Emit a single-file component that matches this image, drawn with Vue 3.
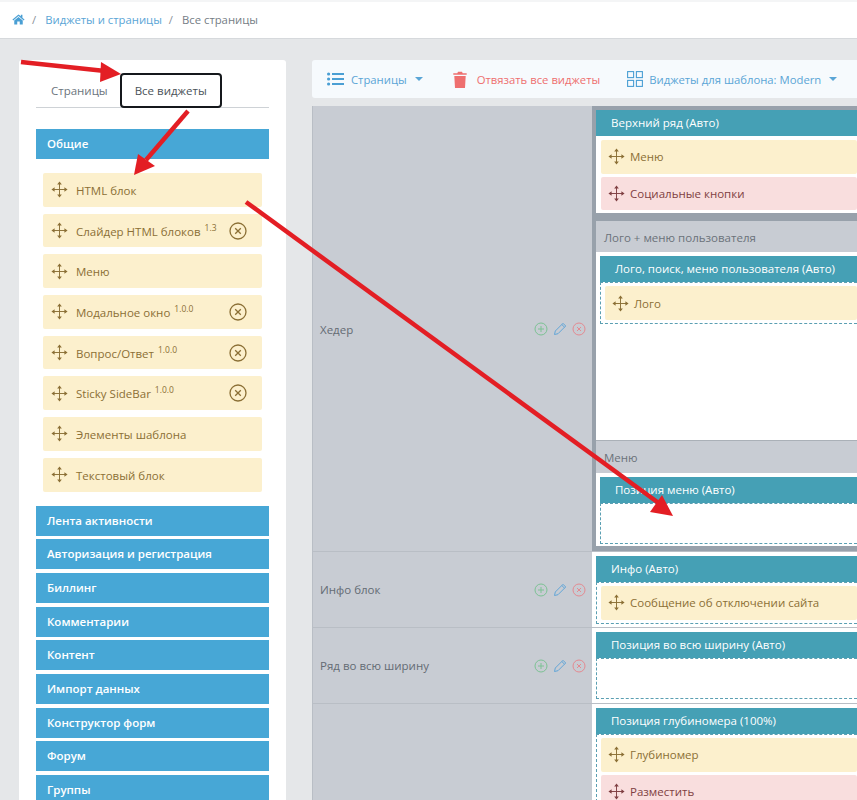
<script setup>
const general = [
  { name: 'HTML блок' },
  { name: 'Слайдер HTML блоков', ver: '1.3', off: true },
  { name: 'Меню' },
  { name: 'Модальное окно', ver: '1.0.0', off: true },
  { name: 'Вопрос/Ответ', ver: '1.0.0', off: true },
  { name: 'Sticky SideBar', ver: '1.0.0', off: true },
  { name: 'Элементы шаблона' },
  { name: 'Текстовый блок' },
]
const groups = [
  'Лента активности',
  'Авторизация и регистрация',
  'Биллинг',
  'Комментарии',
  'Контент',
  'Импорт данных',
  'Конструктор форм',
  'Форум',
  'Группы',
]
const moveLines = 'M8 2V14M2 8H14'
const moveHeads = 'M5.8 3.4L8 0.4L10.2 3.4ZM5.8 12.6L8 15.6L10.2 12.6ZM3.4 5.8L0.4 8L3.4 10.2ZM12.6 5.8L15.6 8L12.6 10.2Z'
</script>

<template>
  <div class="page">
    <nav class="crumbs">
      <svg class="home" viewBox="0 0 16 14" width="13" height="11"><path d="M8 0.5L0.3 7L1.3 8.2L8 2.6L14.7 8.2L15.7 7L13 4.7V1H11V3L8 0.5ZM2.6 8.4V13.5H6.4V9.6H9.6V13.5H13.4V8.4L8 3.9Z" /></svg>
      <span class="sep">/</span>
      <a class="link">Виджеты и страницы</a>
      <span class="sep">/</span>
      <span class="current">Все страницы</span>
    </nav>

    <div class="content">
      <aside class="side">
        <div class="tabs">
          <span class="tab">Страницы</span>
          <span class="tab active">Все виджеты</span>
        </div>
        <div class="group first">Общие</div>
        <div class="widgets">
          <div v-for="w in general" :key="w.name" class="widget yellow">
            <svg class="move" viewBox="0 0 16 16" width="17" height="17"><path class="ml" :d="moveLines" /><path class="mh" :d="moveHeads" /></svg>
            <span class="w-name">{{ w.name }}<sup v-if="w.ver">{{ w.ver }}</sup></span>
            <svg v-if="w.off" class="off" viewBox="0 0 18 18" width="18" height="18">
              <circle cx="9" cy="9" r="8" />
              <path d="M6.2 6.2L11.8 11.8M11.8 6.2L6.2 11.8" />
            </svg>
          </div>
        </div>
        <div class="groups">
          <div v-for="g in groups" :key="g" class="group">{{ g }}</div>
        </div>
      </aside>

      <main class="main">
        <div class="toolbar">
          <svg class="tool-icon" viewBox="0 0 17 14" width="17" height="14" fill="#4a9fd4">
            <circle cx="1.6" cy="2" r="1.6" /><circle cx="1.6" cy="7" r="1.6" /><circle cx="1.6" cy="12" r="1.6" />
            <rect x="5" y="1" width="12" height="2" /><rect x="5" y="6" width="12" height="2" /><rect x="5" y="11" width="12" height="2" />
          </svg>
          <span class="tool-text">Страницы</span>
          <i class="caret"></i>
          <svg class="trash" viewBox="0 0 14 17" width="14" height="17" fill="#ee6f6f">
            <path d="M0.3 2.2H4.3L5 0.8H9L9.7 2.2H13.7V3.8H0.3ZM1.3 5H12.7L12 17H2Z" />
          </svg>
          <span class="tool-text red">Отвязать все виджеты</span>
          <svg class="grid-icon" viewBox="0 0 16 16" width="16" height="16" fill="none" stroke="#4a9fd4" stroke-width="1.1">
            <rect x="0.6" y="0.6" width="6" height="6" /><rect x="9.4" y="0.6" width="6" height="6" />
            <rect x="0.6" y="9.4" width="6" height="6" /><rect x="9.4" y="9.4" width="6" height="6" />
          </svg>
          <span class="tool-text tpl">Виджеты для шаблона: Modern</span>
          <i class="caret"></i>
        </div>

        <div class="table">
          <section class="row header-row">
            <div class="row-side">
              <span class="hdr-name">Хедер</span>
              <div class="row-actions">
                <svg viewBox="0 0 14 14" width="14" height="14" class="green"><circle cx="7" cy="7" r="6" /><path d="M7 4V10M4 7H10" /></svg>
                <svg viewBox="0 0 14 14" width="14" height="14" class="blue"><path d="M1.5 12.5L2.3 9L10 1.3L12.7 4L5 11.7ZM8.8 2.5L11.5 5.2" /></svg>
                <svg viewBox="0 0 14 14" width="14" height="14" class="pink"><circle cx="7" cy="7" r="6" /><path d="M5 5L9 9M9 5L5 9" /></svg>
              </div>
            </div>
            <div class="row-main nested">
              <div class="block">
                <div class="pos-title">Верхний ряд (Авто)</div>
                <div class="pos-drop solid">
                  <div class="widget yellow wide"><svg class="move" viewBox="0 0 16 16" width="17" height="17"><path class="ml" :d="moveLines" /><path class="mh" :d="moveHeads" /></svg><span>Меню</span></div>
                  <div class="widget rose wide"><svg class="move" viewBox="0 0 16 16" width="17" height="17"><path class="ml" :d="moveLines" /><path class="mh" :d="moveHeads" /></svg><span>Социальные кнопки</span></div>
                </div>
              </div>
              <div class="sub sub-logo">
                <div class="sub-title">Лого + меню пользователя</div>
                <div class="sub-body tall">
                  <div class="pos-title">Лого, поиск, меню пользователя (Авто)</div>
                  <div class="pos-drop">
                    <div class="widget yellow wide"><svg class="move" viewBox="0 0 16 16" width="17" height="17"><path class="ml" :d="moveLines" /><path class="mh" :d="moveHeads" /></svg><span class="w-name">Лого</span></div>
                  </div>
                </div>
              </div>
              <div class="sub sub-menu">
                <div class="sub-title">Меню</div>
                <div class="sub-body">
                  <div class="pos-title">Позиция меню (Авто)</div>
                  <div class="pos-drop empty"></div>
                </div>
              </div>
            </div>
          </section>

          <section class="row short">
            <div class="row-side">
              <span>Инфо блок</span>
              <div class="row-actions">
                <svg viewBox="0 0 14 14" width="14" height="14" class="green"><circle cx="7" cy="7" r="6" /><path d="M7 4V10M4 7H10" /></svg>
                <svg viewBox="0 0 14 14" width="14" height="14" class="blue"><path d="M1.5 12.5L2.3 9L10 1.3L12.7 4L5 11.7ZM8.8 2.5L11.5 5.2" /></svg>
                <svg viewBox="0 0 14 14" width="14" height="14" class="pink"><circle cx="7" cy="7" r="6" /><path d="M5 5L9 9M9 5L5 9" /></svg>
              </div>
            </div>
            <div class="row-main">
              <div class="pos-title">Инфо (Авто)</div>
              <div class="pos-drop">
                <div class="widget yellow wide"><svg class="move" viewBox="0 0 16 16" width="17" height="17"><path class="ml" :d="moveLines" /><path class="mh" :d="moveHeads" /></svg><span>Сообщение об отключении сайта</span></div>
              </div>
            </div>
          </section>

          <section class="row short">
            <div class="row-side">
              <span>Ряд во всю ширину</span>
              <div class="row-actions">
                <svg viewBox="0 0 14 14" width="14" height="14" class="green"><circle cx="7" cy="7" r="6" /><path d="M7 4V10M4 7H10" /></svg>
                <svg viewBox="0 0 14 14" width="14" height="14" class="blue"><path d="M1.5 12.5L2.3 9L10 1.3L12.7 4L5 11.7ZM8.8 2.5L11.5 5.2" /></svg>
                <svg viewBox="0 0 14 14" width="14" height="14" class="pink"><circle cx="7" cy="7" r="6" /><path d="M5 5L9 9M9 5L5 9" /></svg>
              </div>
            </div>
            <div class="row-main">
              <div class="pos-title">Позиция во всю ширину (Авто)</div>
              <div class="pos-drop empty"></div>
            </div>
          </section>

          <section class="row last">
            <div class="row-side"></div>
            <div class="row-main">
              <div class="pos-title">Позиция глубиномера (100%)</div>
              <div class="pos-drop">
                <div class="widget yellow wide"><svg class="move" viewBox="0 0 16 16" width="17" height="17"><path class="ml" :d="moveLines" /><path class="mh" :d="moveHeads" /></svg><span>Глубиномер</span></div>
                <div class="widget rose wide"><svg class="move" viewBox="0 0 16 16" width="17" height="17"><path class="ml" :d="moveLines" /><path class="mh" :d="moveHeads" /></svg><span>Разместить</span></div>
              </div>
            </div>
          </section>
        </div>
      </main>
    </div>

    <svg class="arrows" viewBox="0 0 857 800" width="857" height="800">
      <path d="M21 62L105 71" />
      <polygon points="121,74 101,62 100,82" />
      <path d="M188 111L146 160" />
      <polygon points="134,175 138,154 155,166" />
      <path d="M246 202L660 504" />
      <polygon points="673,516 662,495 650,512" />
    </svg>
  </div>
</template>

<style>
html, body {
  margin: 0;
  background: #e5e7e9;
}
</style>

<style scoped>
.page {
  position: relative;
  width: 857px;
  height: 800px;
  overflow: hidden;
  background: #e5e7e9;
  font-family: "Open Sans", "Noto Sans", sans-serif;
  font-size: 11.5px;
  color: #6c757d;
}
.crumbs {
  display: flex;
  align-items: center;
  height: 38px;
  padding-left: 12px;
  background: #fff;
  border-bottom: 1px solid #d6d9dc;
  box-shadow: inset 0 2px 0 #f4f5f6;
  font-size: 11.3px;
}
.home {
  fill: #4a9fd4;
}
.sep {
  margin: 0 9px 0 7px;
  color: #8a9299;
}
.link {
  color: #5aa5d6;
}
.current {
  color: #757d85;
}
.content {
  display: flex;
  gap: 26px;
  padding: 21px 0 0 19px;
}
.side {
  flex: none;
  width: 267px;
  height: 760px;
  box-sizing: border-box;
  padding: 13px 17px 0;
  background: #fff;
  border-radius: 3px;
}
.tabs {
  display: flex;
  height: 34px;
  padding-left: 15px;
  gap: 12px;
  border-bottom: 1px solid #ced2d6;
  align-items: center;
  margin-bottom: 21px;
}
.tab {
  color: #6c757d;
}
.tab.active {
  display: flex;
  align-items: center;
  justify-content: center;
  width: 102px;
  height: 35px;
  margin-top: 1px;
  box-sizing: border-box;
  border: 2px solid #15181c;
  border-radius: 4px;
  background: #fff;
  color: #4a5258;
}
.group {
  height: 30px;
  line-height: 30px;
  padding-left: 11px;
  background: #47a7d6;
  color: #fff;
  font-weight: 600;
}
.widgets {
  display: flex;
  flex-direction: column;
  gap: 7px;
  padding: 14px 7px 14px;
}
.groups {
  display: flex;
  flex-direction: column;
  gap: 3.7px;
}
.widget {
  display: flex;
  align-items: center;
  gap: 8px;
  height: 33.7px;
  padding-left: 8px;
  border-radius: 2px;
}
.w-name {
  padding-top: 1px;
}
.hdr-name {
  padding-top: 1px;
}
.yellow {
  background: #fcf0cd;
  color: #8b6f35;
}
.rose {
  background: #f9dede;
  color: #7f3f42;
}
.wide {
  padding-left: 7px;
  gap: 5px;
}
.move {
  flex: none;
}
.ml {
  fill: none;
  stroke: currentColor;
  stroke-width: 0.9;
}
.mh {
  fill: currentColor;
}
sup {
  font-size: 8.5px;
  margin-left: 4px;
  line-height: 0;
  vertical-align: 5px;
}
.off {
  flex: none;
  margin-left: auto;
  margin-right: 15px;
  fill: none;
  stroke: #8b6f35;
  stroke-width: 1.3;
}
.main {
  flex: 1;
  min-width: 0;
}
.toolbar {
  display: flex;
  align-items: center;
  height: 38px;
  padding-left: 15px;
  margin-bottom: 8px;
  background: #f6fafd;
  border-radius: 3px 0 0 3px;
  font-size: 11.3px;
}
.tool-text {
  margin-left: 7px;
  color: #5aa5d6;
  white-space: nowrap;
}
.tool-text.red {
  margin-left: 10px;
  color: #ee6f6f;
}
.tool-text.tpl {
  margin-left: 6px;
}
.caret {
  width: 0;
  height: 0;
  margin-left: 8px;
  border: 4px solid transparent;
  border-top-color: #5aa5d6;
  border-bottom: 0;
}
.trash {
  margin-left: 30px;
}
.grid-icon {
  margin-left: 27px;
}
.table {
  border-left: 1px solid #b9bec5;
}
.row {
  display: flex;
  border-top: 1px solid #b9bec5;
  background: #fff;
}
.header-row {
  height: 445px;
  border-top: 0;
}
.short {
  height: 75px;
}
.last {
  height: 100px;
}
.row-side {
  flex: none;
  display: flex;
  align-items: center;
  justify-content: space-between;
  width: 279px;
  padding: 0 6px 0 7px;
  box-sizing: border-box;
  background: #c8ccd3;
  color: #646b73;
}
.row-actions {
  display: flex;
  gap: 5px;
}
.row-actions svg {
  fill: none;
  stroke-width: 1;
}
.green {
  stroke: #7cc294;
}
.blue {
  stroke: #62a6d8;
  stroke-width: 1.2;
}
.pink {
  stroke: #e48a91;
}
.row-main {
  flex: 1;
  min-width: 0;
  padding: 4px 0 0 4px;
  background: #fff;
}
.nested {
  display: flex;
  flex-direction: column;
  padding: 4px 0 6px 4px;
  background: #98a1ab;
}
.block {
  margin-bottom: 8px;
}
.block .pos-title {
  line-height: 25px;
}
.pos-title {
  height: 26px;
  line-height: 26px;
  padding-left: 15px;
  background: #45a0b5;
  color: #fff;
  white-space: nowrap;
}
.pos-drop {
  display: flex;
  flex-direction: column;
  gap: 3px;
  padding: 3px 0 3px 4px;
  background: #fff;
  border: 1px dashed #5a9fb2;
  border-right: 0;
}
.pos-drop.solid {
  border-color: #fff;
  border-top: 1px dashed #fff;
  padding-bottom: 2px;
  background: #fff;
}
.pos-drop.empty {
  height: 33px;
}
.sub {
  background: #fff;
}
.sub-logo {
  border-bottom: 1px solid #aab0b7;
}
.sub-title {
  height: 31px;
  line-height: 34px;
  padding-left: 8px;
  background: #c8ccd3;
  color: #6b727a;
}
.sub-menu .sub-title {
  height: 32px;
}
.sub-body {
  padding: 4px 0 2px 4px;
  background: #fff;
}
.sub-body.tall {
  height: 184px;
  padding-bottom: 0;
}
.arrows {
  position: absolute;
  left: 0;
  top: 0;
  pointer-events: none;
}
.arrows path {
  fill: none;
  stroke: #e31e24;
  stroke-width: 4.5;
}
.arrows polygon {
  fill: #e31e24;
}
</style>
